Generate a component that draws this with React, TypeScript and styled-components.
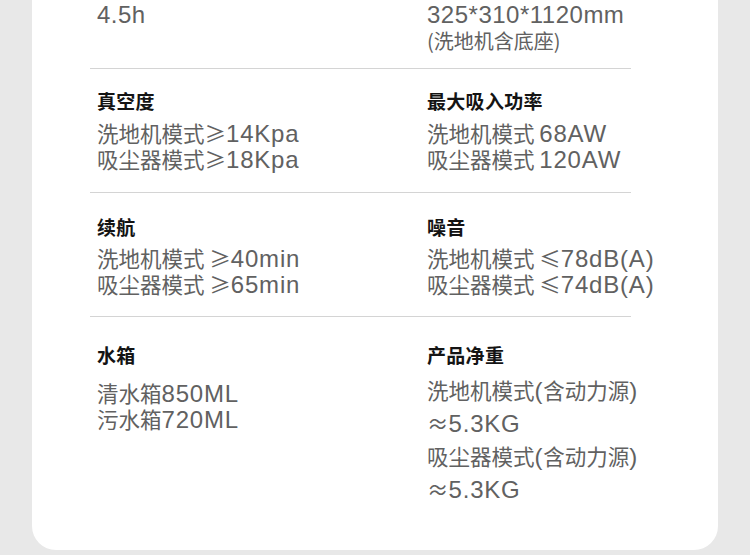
import React from "react";
import styled, { createGlobalStyle } from "styled-components";

const GlobalStyle = createGlobalStyle`
  html, body { margin: 0; padding: 0; background: #e8e8e8; }
  body { font-family: "Noto Sans CJK SC", "Liberation Sans", sans-serif; }
  * { box-sizing: border-box; }
`;

const Page = styled.div`
  width: 750px;
  height: 555px;
  padding: 0 32px 5px 32px;
  display: flex;
  flex-direction: column;
  overflow: hidden;
  background: #e8e8e8;
`;

const Card = styled.div`
  flex: 1;
  background: #ffffff;
  border-radius: 0 0 24px 24px;
  padding: 0 87px 0 58px;
  display: flex;
  flex-direction: column;
`;

const SpecRow = styled.div<{ $pt: number; $pb: number; $first?: boolean }>`
  display: grid;
  grid-template-columns: 330px 1fr;
  padding: ${(p) => p.$pt}px 0 ${(p) => p.$pb}px 7px;
  border-top: ${(p) => (p.$first ? "none" : "1px solid #d4d4d4")};
`;

const Cell = styled.div`
  display: flex;
  flex-direction: column;
  align-items: flex-start;
  min-width: 0;
`;

const Heading = styled.div`
  font-family: "Noto Sans CJK SC", "Liberation Sans", sans-serif;
  font-weight: 700;
  font-size: 19px;
  height: 24px;
  line-height: 24px;
  letter-spacing: 0.3px;
  color: #141414;
  white-space: nowrap;
`;

const Values = styled.div<{ $gap: number }>`
  margin-top: ${(p) => p.$gap}px;
  font-size: 21.5px;
  color: #616161;
  font-weight: 400;
  white-space: nowrap;
`;

const Line = styled.div<{ $lh: number }>`
  height: ${(p) => p.$lh}px;
  line-height: ${(p) => p.$lh}px;
  white-space: nowrap;
`;

const Latin = styled.span<{ $ls: number; $size: number }>`
  font-family: "Liberation Sans", "Noto Sans CJK SC", sans-serif;
  font-size: ${(p) => p.$size}px;
  letter-spacing: ${(p) => p.$ls}px;
  line-height: 1;
`;

const Caption = styled.div`
  font-size: 20px;
  height: 28px;
  line-height: 28px;
  color: #616161;
  white-space: nowrap;
`;

const LATIN_RUN = /([A-Za-z0-9.*()]+)/;
const LATIN_ONLY = /^[A-Za-z0-9.*()]+$/;

function Mixed({ text, ls, size }: { text: string; ls: number; size: number }) {
  const parts = text.split(LATIN_RUN).filter((s) => s.length > 0);
  return (
    <>
      {parts.map((s, i) =>
        LATIN_ONLY.test(s) ? (
          <Latin key={i} $ls={ls} $size={size}>
            {s}
          </Latin>
        ) : (
          <React.Fragment key={i}>{s}</React.Fragment>
        )
      )}
    </>
  );
}

type CellData = {
  title?: string;
  lines: string[];
  gap: number;
  lh: number;
  ls?: number;
  caption?: string;
};

type RowData = { pt: number; pb: number; cells: [CellData, CellData] };

const rows: RowData[] = [
  {
    pt: 0,
    pb: 12,
    cells: [
      { lines: ["4.5h"], gap: 0, lh: 27, ls: 0.5 },
      {
        lines: ["325*310*1120mm"],
        gap: 0,
        lh: 27,
        ls: 0.5,
        caption: "(洗地机含底座)",
      },
    ],
  },
  {
    pt: 20,
    pb: 20,
    cells: [
      { title: "真空度", lines: ["洗地机模式≥14Kpa", "吸尘器模式≥18Kpa"], gap: 7, lh: 26 },
      { title: "最大吸入功率", lines: ["洗地机模式 68AW", "吸尘器模式 120AW"], gap: 7, lh: 26 },
    ],
  },
  {
    pt: 22,
    pb: 19,
    cells: [
      { title: "续航", lines: ["洗地机模式 ≥40min", "吸尘器模式 ≥65min"], gap: 6, lh: 26 },
      { title: "噪音", lines: ["洗地机模式 ≤78dB(A)", "吸尘器模式 ≤74dB(A)"], gap: 6, lh: 26 },
    ],
  },
  {
    pt: 26,
    pb: 0,
    cells: [
      { title: "水箱", lines: ["清水箱850ML", "污水箱720ML"], gap: 13, lh: 26 },
      {
        title: "产品净重",
        lines: ["洗地机模式(含动力源)", "≈5.3KG", "吸尘器模式(含动力源)", "≈5.3KG"],
        gap: 6,
        lh: 33,
      },
    ],
  },
];

export default function App() {
  return (
    <>
      <GlobalStyle />
      <Page>
        <Card>
          {rows.map((row, ri) => (
            <SpecRow key={ri} $pt={row.pt} $pb={ri === 0 ? row.pb + 1 : row.pb} $first={ri === 0}>
              {row.cells.map((c, ci) => (
                <Cell key={ci}>
                  {c.title && <Heading>{c.title}</Heading>}
                  <Values $gap={c.gap}>
                    {c.lines.map((l, li) => (
                      <Line key={li} $lh={c.lh}>
                        <Mixed text={l} ls={c.ls ?? 0.8} size={24} />
                      </Line>
                    ))}
                  </Values>
                  {c.caption && <Caption>{c.caption}</Caption>}
                </Cell>
              ))}
            </SpecRow>
          ))}
        </Card>
      </Page>
    </>
  );
}
